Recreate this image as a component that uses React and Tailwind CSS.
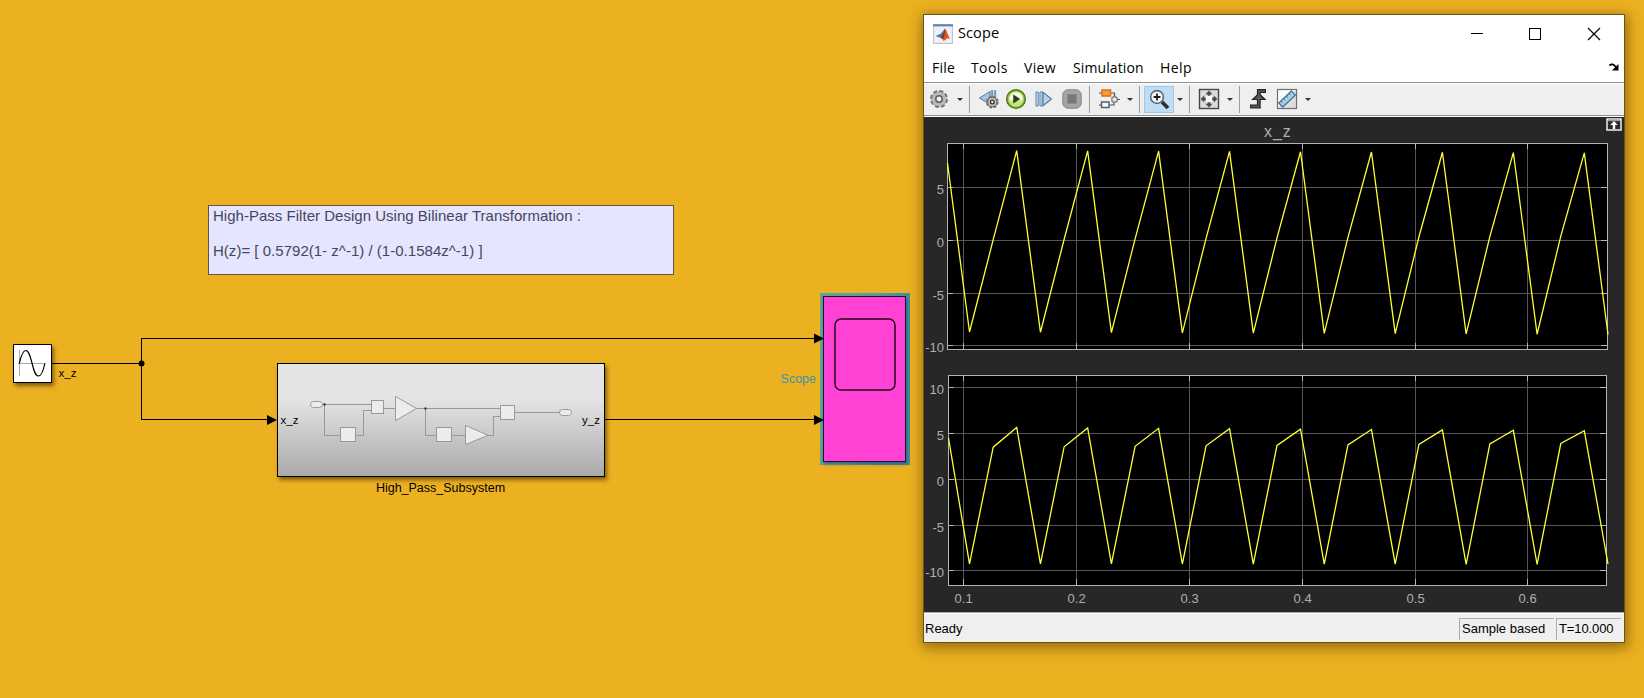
import React from "react";

const GRID_X = [963, 1076, 1189, 1302, 1415, 1527];
const CYCLES = [0, 1, 2, 3, 4, 5, 6, 7, 8];
const PERIOD = 70.95;

const inputSignal =
  "947.5,163 " +
  CYCLES.map((i) => {
    const x = i * PERIOD;
    return `${969.5 + x},${332 + i * 0.28} ${993.2 + x},${239.7 - i * 0.45} ${1016.7 + x},${150.6 + i * 0.28}`;
  }).join(" ") +
  " 1608,334.5";

const outputSignal =
  "948.5,438 " +
  CYCLES.map((i) => {
    const x = i * PERIOD;
    return `${969.5 + x},${563.8 + i * 0.07} ${993.2 + x},${447.2 - i * 0.46} ${1016.7 + x},${427.5 + i * 0.4}`;
  }).join(" ") +
  " 1608,564";

function Axes({ left, right, top, bottom, rows, signal }) {
  return (
    <g shapeRendering="crispEdges">
      <rect x={left + 0.5} y={top + 0.5} width={right - left} height={bottom - top} fill="#000" />
      {GRID_X.map((x) => (
        <path key={x} d={`M${x + 0.5} ${top}V${bottom}`} stroke="#575757" />
      ))}
      {rows.map(([y]) => (
        <path key={y} d={`M${left} ${y + 0.5}H${right}`} stroke="#575757" />
      ))}
      {GRID_X.map((x) => (
        <path key={x} d={`M${x + 0.5} ${top}v6M${x + 0.5} ${bottom}v-6`} stroke="#b4b4b4" />
      ))}
      {rows.map(([y]) => (
        <path key={y} d={`M${left} ${y + 0.5}h6M${right} ${y + 0.5}h-6`} stroke="#b4b4b4" />
      ))}
      <rect x={left + 0.5} y={top + 0.5} width={right - left} height={bottom - top} fill="none" stroke="#b4b4b4" />
      {rows.map(([y, label]) => (
        <text key={label} x="944" y={y + 7} textAnchor="end" fill="#afafaf" fontSize="13">
          {label}
        </text>
      ))}
      <polyline points={signal} fill="none" stroke="#ffff38" strokeWidth="1.3" shapeRendering="auto" />
    </g>
  );
}

function Plots() {
  return (
    <svg className="block h-[495px] w-[700px] bg-[#272727]" viewBox="924 117 700 495" fontFamily='"Liberation Sans", Arial, sans-serif'>
      <text x="1264" y="137" fontSize="16" letterSpacing="0.9" fill="#afafaf">x_z</text>
      <Axes left={947} right={1607} top={143} bottom={349} signal={inputSignal}
        rows={[[187, "5"], [240, "0"], [293, "-5"], [345, "-10"]]} />
      <Axes left={948} right={1606} top={375} bottom={585} signal={outputSignal}
        rows={[[387, "10"], [433, "5"], [479, "0"], [525, "-5"], [570, "-10"]]} />
      {GRID_X.map((x, i) => (
        <text key={x} x={x + 0.6} y="603" textAnchor="middle" fontSize="13" fill="#afafaf">
          {`0.${i + 1}`}
        </text>
      ))}
      <rect x="1607" y="119" width="14" height="11" fill="#2b2b2b" stroke="#fff" strokeWidth="1.4" />
      <path d="M1608 120.5h12" stroke="#999" strokeWidth="1.5" />
      <path d="M1614 121l3.8 4h-2.6v4h-2.4v-4h-2.6z" fill="#fff" />
    </svg>
  );
}

const Caret = ({ className }) => (
  <div className={`flex justify-center ${className}`}>
    <svg className="h-[3px] w-[6px]" viewBox="0 0 6 3"><path d="M0 0h6L3 3z" fill="#333" /></svg>
  </div>
);

const Sep = ({ className }) => <div className={`h-[27px] w-px bg-[#9c9c9c] ${className}`} />;

const Tool = ({ className, children }) => (
  <div className={`flex h-[27px] items-center justify-center ${className}`}>
    <svg className="h-[22px] w-[22px]" viewBox="0 0 22 22" fill="none">{children}</svg>
  </div>
);

function Toolbar() {
  return (
    <div className="flex h-[34px] items-center border-y border-t-[#8f8f8f] border-b-[#8f8f8f] bg-[#efefef] shadow-[inset_0_1px_#fff]">
      <Tool className="w-[30px]">
        <circle cx="11" cy="11" r="8" stroke="#777" strokeWidth="2" strokeDasharray="4.2 2.08" />
        <circle cx="11" cy="11" r="6.2" fill="#c4c4c4" stroke="#777" strokeWidth="2.4" />
        <circle cx="11" cy="11" r="6" stroke="#bdbdbd" strokeWidth="2" />
        <circle cx="11" cy="11" r="3.2" fill="#eee" stroke="#5c5c5c" strokeWidth="1.5" />
      </Tool>
      <Caret className="w-[12px]" />
      <Sep className="ml-[3px]" />
      <Tool className="ml-[4px] w-[29px]">
        <path d="M1.5 10L12 3.5v13z" fill="#a9c4dc" stroke="#557a9e" />
        <path d="M13.2 2.5h1.3v9h-1.3zM16.2 2.5h1.5v9h-1.5z" fill="#a5c4df" stroke="#6387a8" strokeWidth=".8" />
        <circle cx="14.3" cy="14" r="5.7" stroke="#707070" strokeWidth="1.4" strokeDasharray="2.9 1.58" />
        <circle cx="14.3" cy="14" r="4.6" fill="#cfcfcf" stroke="#6d6d6d" strokeWidth="1.3" />
        <circle cx="14.3" cy="14" r="1.9" fill="#eee" stroke="#333" strokeWidth="1.4" />
      </Tool>
      <Tool className="w-[26px]">
        <circle cx="11" cy="11" r="9.3" fill="#9ccb4c" stroke="#4b7a1c" strokeWidth="1.5" />
        <circle cx="11" cy="11" r="7" fill="#f4fbdc" />
        <path d="M4.500 12.500a6.600 6.600 0 0 0 13 0z" fill="#c4e580" />
        <path d="M8.2 6.5v9l7-4.5z" fill="#2f3d27" />
      </Tool>
      <Tool className="w-[30px]">
        <path d="M3 4h2.2v14H3zM7 4h2.2v14H7z" fill="#d9e8f5" stroke="#5580a8" />
        <path d="M10 4.2v13.6l8.5-6.8z" fill="#b9d2e8" stroke="#5580a8" strokeWidth="1.2" />
      </Tool>
      <Tool className="w-[26px]">
        <rect x="1" y="1" width="20" height="20" rx="6.5" fill="#a3a3a3" />
        <rect x="1.8" y="1.8" width="18.4" height="18.4" rx="6" stroke="#989898" />
        <rect x="6.5" y="6.5" width="9" height="9" fill="#777" stroke="#8a8a8a" />
      </Tool>
      <Sep className="ml-[4px]" />
      <Tool className="ml-[4px] w-[29px]">
        <path d="M1 5h3M13 5h3.500v3.500M1 17h3M11 17h5v-3" stroke="#55504c" strokeWidth="1.200" />
        <rect x="4" y="2" width="8.5" height="6" fill="#f89a3c" stroke="#d9700f" strokeWidth="1.5" />
        <rect x="3.5" y="14" width="7.5" height="5.5" fill="#f4f7fb" stroke="#56616f" strokeWidth="1.5" />
        <circle cx="16.5" cy="11.5" r="2.8" fill="#e5ebf1" stroke="#7e8791" strokeWidth="1.4" />
        <path d="M19.3 11.5H22" stroke="#555" />
      </Tool>
      <Caret className="w-[14px]" />
      <Sep className="ml-[2px]" />
      <Tool className="ml-[4px] w-[30px] border border-[#9acbee] bg-[#bfddf4]">
        <path d="M14 14l6 6" stroke="#2f2f2f" strokeWidth="3.8" />
        <circle cx="9" cy="9" r="6.4" fill="#f4f8fb" stroke="#5f6a73" strokeWidth="1.6" />
        <path d="M9 5.6v6.8M5.6 9h6.8" stroke="#1d1d1d" strokeWidth="1.8" />
      </Tool>
      <Caret className="w-[12px]" />
      <Sep className="ml-[3px]" />
      <Tool className="ml-[4px] w-[30px]">
        <rect x="1.5" y="1.5" width="19" height="19" fill="#dcdcdc" stroke="#474747" strokeWidth="1.4" />
        <path d="M11 5.500L16.500 11 11 16.500 5.500 11z" fill="#f8f8f8" />
        <path d="M11 2.600l3.600 3.600h-2.200v1.600H9.600V6.200H7.400zM11 19.400l3.600-3.600h-2.200v-1.600H9.600v1.600H7.400zM2.600 11l3.600-3.600v2.200h1.600v2.800H6.200v2.200zM19.400 11l-3.600-3.600v2.200h-1.600v2.800h1.600v2.200z" fill="#4d4d4d" />
      </Tool>
      <Caret className="w-[12px]" />
      <Sep className="ml-[3px]" />
      <Tool className="ml-[4px] w-[28px]">
        <path d="M19 3h-7.200v15.500H3" stroke="#222" strokeWidth="3.800" />
        <path d="M11.800 5.500L18 11.500H5.600z" fill="#555" stroke="#222" strokeWidth="1.200" />
        <path d="M18 3h-6.200v15.500H4" stroke="#606060" strokeWidth="1.300" />
      </Tool>
      <Tool className="w-[30px]">
        <rect x="1.5" y="1.5" width="19" height="19" fill="#dedede" stroke="#6d6d6d" strokeWidth="1.2" />
        <path d="M2.200 19.800V2.200h17.600z" fill="#fafafa" />
        <path d="M15.500 3l3.800 4.100L6.700 19l-4-4z" fill="#a9cde3" stroke="#3f7598" strokeWidth="1.3" />
        <path d="M5 13l1.600 1.700M7.600 10.500l1.600 1.700M10.200 8l1.600 1.700M12.800 5.500l1.600 1.700" stroke="#3c6d8e" />
      </Tool>
      <Caret className="w-[12px]" />
    </div>
  );
}

function ScopeWindow() {
  return (
    <div className="absolute top-[14px] left-[923px] flex h-[629px] w-[702px] flex-col border border-[#6a5318] bg-white shadow-[1px_3px_12px_2px_rgba(70,45,0,0.5)]">
      <div className="flex h-[37px] items-center pl-[9px] font-['Open_Sans',sans-serif] text-black">
        <svg className="h-[20px] w-[20px]" viewBox="0 0 20 20">
          <rect x=".6" y=".6" width="18.800" height="18.800" fill="#eef1f5" stroke="#b4bfca" />
          <path d="M0 1.300h20" stroke="#5f87b2" strokeWidth="2.200" />
          <path d="M2.500 12l5-2.300 4.500-5-3.500 9.500z" fill="#3f7fb5" />
          <path d="M12 4.500c1.500 1 2.500 6 5 10.500-1.600-1-2.600-1.200-4 .300-1 1-1.800 1.700-2.800 1.500-.400-1.500-1-2.300-2.200-2.800C10 11.500 10.800 7 12 4.500z" fill="#d9541e" />
          <path d="M12 4.500c-1 2-1.700 6.500-4 9.500.7.300 1 .5 1.400 1 2-2 2.400-6 2.600-10.500z" fill="#7c2a1a" />
        </svg>
        <span className="ml-[5px] w-[44px] pb-[1px] text-[14.500px] tracking-[0.1px]">Scope</span>
        <svg className="mr-[23px] ml-auto h-[14px] w-[131px]" viewBox="0 0 131 14" fill="none" stroke="#000" shapeRendering="crispEdges">
          <path d="M1 6.500h12" />
          <rect x="59.500" y="1.500" width="11" height="11" />
          <path d="M118 1l12 12M130 1l-12 12" shapeRendering="auto" strokeWidth="1.200" />
        </svg>
      </div>
      <div className="flex h-[30px] items-center pl-[8px] font-['Open_Sans',sans-serif] text-[14px] text-black">
        <span className="w-[39px] tracking-[0.2px]">File</span>
        <span className="w-[53px] tracking-[0.400px]">Tools</span>
        <span className="w-[49px] tracking-[0.300px]">View</span>
        <span className="w-[87px] tracking-[0.1px]">Simulation</span>
        <span className="tracking-[0.400px]">Help</span>
        <svg className="mr-[5px] ml-auto h-[8px] w-[10px]" viewBox="0 0 10 8">
          <path d="M.5 2.500C2.500.5 5 1 7 4.500" fill="none" stroke="#000" strokeWidth="1.800" />
          <path d="M9.500 1v6.500H3z" fill="#000" />
        </svg>
      </div>
      <Toolbar />
      <div className="h-px bg-white" />
      <Plots />
      <div className="flex grow items-center border-t border-[#a8a8a8] bg-[#efefef] pl-[1px] font-['Liberation_Sans',Arial,sans-serif] text-[13px] text-black shadow-[inset_0_1px_#fff]">
        <span className="pt-[2px]">Ready</span>
        <div className="mt-[2px] mr-[2px] ml-auto flex h-[22px] w-[95px] items-center border-t border-l border-[#acacac] pl-[2px]">Sample based</div>
        <div className="mt-[2px] mr-[3px] flex h-[22px] w-[65px] items-center border-t border-l border-[#acacac] pl-[2px] tracking-[-0.100px]">T=10.000</div>
      </div>
    </div>
  );
}

function Wires() {
  return (
    <svg className="absolute inset-0 h-[698px] w-[924px]" viewBox="0 0 924 698" fontFamily='"Liberation Sans", Arial, sans-serif'>
      <g fill="none" stroke="#000" shapeRendering="crispEdges">
        <path d="M52 363.500H141.500M816 338.500H141.500V419.500H268M605 419.500H816" />
      </g>
      <circle cx="141.500" cy="363.500" r="3" />
      <path d="M814 333.500l10 5-10 5zM814 415l10 5-10 5zM267 415l10 5-10 5z" />
      <text x="58.500" y="377" fontSize="11.500">x_z</text>
      <text x="440.500" y="492" fontSize="12.500" textAnchor="middle">High_Pass_Subsystem</text>
      <text x="816" y="383" fontSize="12.500" textAnchor="end" fill="#3f93a8">Scope</text>
    </svg>
  );
}

function Subsystem() {
  return (
    <div className="absolute top-[363px] left-[277px] h-[114px] w-[328px] border border-black bg-[linear-gradient(#e5e5e5_0%,#e3e3e3_33%,#a9a9a9_100%)] shadow-[2px_3px_4px_rgba(60,40,0,0.6)]">
      <svg className="block h-[112px] w-[326px]" viewBox="278 364 326 112" fill="none" stroke="#999" fontFamily='"Liberation Sans", Arial, sans-serif'>
        <path d="M323 404.500H372M324.500 404.500V435.500H341M355 435.500H363.500V410.500H372M383 408.500H396M416 408.500H500M425.500 408.500V435.500H437M451 435.500H465M488 435.500H493.500V416.500H500M514 412.500H559" shapeRendering="crispEdges" />
        <g fill="#ececec">
          <rect x="310.500" y="401.500" width="12" height="6" rx="3" />
          <rect x="559.500" y="409.500" width="12" height="6" rx="3" />
          <rect x="371.500" y="400.500" width="12" height="13" />
          <rect x="340.500" y="427.500" width="15" height="14" />
          <rect x="436.500" y="427.500" width="15" height="14" />
          <rect x="500.500" y="405.500" width="14" height="14" />
          <path d="M395.500 396.300L416.500 408.500L395.500 420.700zM465.500 425.500L488 435.300L465.500 444.500z" />
        </g>
        <circle cx="324.500" cy="404.500" r="1.200" fill="#333" stroke="none" />
        <circle cx="425.500" cy="408.500" r="1.200" fill="#333" stroke="none" />
        <text x="280.500" y="424" fontSize="11.500" fill="#000" stroke="none">x_z</text>
        <text x="582" y="424" fontSize="11.500" fill="#000" stroke="none">y_z</text>
      </svg>
    </div>
  );
}

export default function App() {
  return (
    <main className="relative h-[698px] w-[1644px] overflow-hidden bg-[#ecb120]">
      <div className="absolute top-[205px] left-[208px] h-[70px] w-[466px] border border-[#5f5550] bg-[#e5e5ff] pl-[4px] font-['Liberation_Sans',Arial,sans-serif] text-[15px] leading-[17.500px] tracking-[0.020px] whitespace-pre text-[#46465a]">
        <p className="pt-[1px]">High-Pass Filter Design Using Bilinear Transformation :</p>
        <p className="mt-[17.500px]">H(z)= [ 0.5792(1- z^-1) / (1-0.1584z^-1) ]</p>
      </div>
      <div className="absolute top-[344px] left-[13px] h-[39px] w-[39px] border border-black bg-white shadow-[2px_3px_4px_rgba(60,40,0,0.6)]">
        <svg className="block h-[37px] w-[37px]" viewBox="14 345 37 37" fill="none">
          <path d="M19.500 350V376M18 363.500H46" stroke="#aaa" />
          <path d="M19.300 363.500C21 356 23 350.500 25.800 350.500C32 350.500 32 376 38.300 376C41 376 43.500 370 44.800 363.500" stroke="#000" strokeWidth="1.200" />
        </svg>
      </div>
      <Subsystem />
      <div className="absolute top-[293px] left-[820px] h-[172px] w-[90px] bg-[linear-gradient(100deg,#62a592_0%,#5aa095_45%,#43909c_75%)]" />
      <div className="absolute top-[296px] left-[823px] h-[166px] w-[83px] border border-[#14143c] bg-[#ff42d3] pt-[21px] pl-[10px] shadow-[1px_2px_3px_rgba(30,60,110,0.6)]">
        <svg className="block h-[73px] w-[62px]" viewBox="0 0 62 73">
          <rect x="1" y="1" width="60" height="71" rx="6" fill="none" stroke="#1c0418" strokeWidth="1.400" />
        </svg>
      </div>
      <Wires />
      <ScopeWindow />
    </main>
  );
}
